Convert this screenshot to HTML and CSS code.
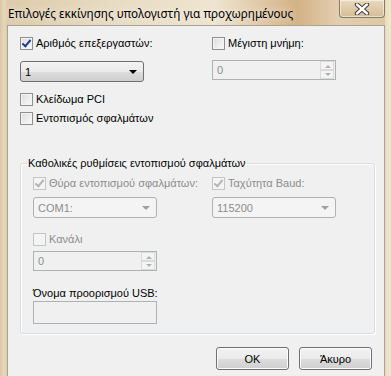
FILE: index.html
```html
<!DOCTYPE html>
<html lang="el">
<head>
  <meta charset="UTF-8" />
  <title>Επιλογές εκκίνησης υπολογιστή για προχωρημένους</title>
  <link rel="stylesheet" href="styles.css">
</head>
<body>
  <div class="window">
    <div class="titlebar">
      <span class="title">Επιλογές εκκίνησης υπολογιστή για προχωρημένους</span>
      <div class="close">
        <svg width="18" height="12" viewBox="0 0 18 12">
          <path d="M4 1.5 L14 10.5 M14 1.5 L4 10.5" stroke="#3d3a36" stroke-width="4.4" stroke-linecap="round"/>
          <path d="M4 1.5 L14 10.5 M14 1.5 L4 10.5" stroke="#fff" stroke-width="2.4" stroke-linecap="round"/>
        </svg>
      </div>
    </div>

    <div class="client">
      <div class="row top-row">
        <div class="col">
          <label class="check"><span class="box checked"></span>Αριθμός επεξεργαστών:</label>
          <div class="combo"><span>1</span><span class="arrow"></span></div>
        </div>
        <div class="col">
          <label class="check"><span class="box"></span>Μέγιστη μνήμη:</label>
          <div class="spin disabled"><span>0</span><span class="spin-btns"><i class="up"></i><i class="down"></i></span></div>
        </div>
      </div>

      <label class="check pci"><span class="box"></span>Κλείδωμα PCI</label>
      <label class="check debug"><span class="box"></span>Εντοπισμός σφαλμάτων</label>

      <fieldset class="group">
        <legend>Καθολικές ρυθμίσεις εντοπισμού σφαλμάτων</legend>
        <div class="row">
          <div class="col">
            <label class="check disabled"><span class="box checked"></span>Θύρα εντοπισμού σφαλμάτων:</label>
            <div class="combo disabled"><span>COM1:</span><span class="arrow"></span></div>
          </div>
          <div class="col">
            <label class="check disabled"><span class="box checked"></span>Ταχύτητα Baud:</label>
            <div class="combo disabled"><span>115200</span><span class="arrow"></span></div>
          </div>
        </div>
        <label class="check disabled channel"><span class="box"></span>Κανάλι</label>
        <div class="spin disabled"><span>0</span><span class="spin-btns"><i class="up"></i><i class="down"></i></span></div>
        <div class="usb-label">Όνομα προορισμού USB:</div>
        <div class="textbox"></div>
      </fieldset>

      <div class="buttons">
        <button class="btn">OK</button>
        <button class="btn">Άκυρο</button>
      </div>
    </div>
  </div>
</body>
</html>
```

FILE: styles.css
```css
html, body {
  margin: 0;
  padding: 0;
  width: 391px;
  height: 376px;
  overflow: hidden;
}

.window {
  width: 391px;
  height: 376px;
  display: flex;
  flex-direction: column;
  background:
    linear-gradient(90deg, #d8c6a2 0px, #e6d8bb 4px, #ddcca9 7px, transparent 7px, transparent 385px, #e8dcc0 385px, #f2e9cc 391px),
    linear-gradient(90deg, #dccaa8 0%, #e8dcc4 30%, #efe4cf 55%, #d3b285 76%, #e2cdb0 86%, #ddc7a3 100%);
  font-family: "Liberation Sans", Arial, sans-serif;
  font-size: 11px;
  color: #000;
}

.titlebar {
  height: 25px;
  display: flex;
  align-items: flex-start;
  justify-content: space-between;
  flex-shrink: 0;
}

.title {
  font-family: "Noto Sans", sans-serif;
  font-size: 11.7px;
  margin: 5px 0 0 8px;
  color: #000;
  text-shadow: 0 0 8px rgba(255, 255, 255, 0.9);
}

.close {
  width: 44px;
  height: 17px;
  margin-right: 6px;
  border: 1px solid #8a7a64;
  border-top: none;
  border-radius: 0 0 4px 4px;
  background: linear-gradient(#e9d9bd, #d6bc96);
  box-shadow: inset 0 0 0 1px rgba(255, 255, 255, 0.5);
  display: flex;
  align-items: center;
  justify-content: center;
}

.client {
  flex: 1;
  margin: 0 6px 0 7px;
  border: 1px solid #a5a39e;
  border-bottom: none;
  background: #f0f0f0;
  padding: 11px 0 0 12px;
  display: flex;
  flex-direction: column;
}

.row {
  display: flex;
}

.col {
  width: 192px;
  flex-shrink: 0;
  display: flex;
  flex-direction: column;
}

.group .col {
  width: 179px;
}

.check {
  display: flex;
  align-items: center;
  height: 13px;
  line-height: 13px;
  white-space: nowrap;
}

.check.disabled {
  color: #8d8d8d;
}

.box {
  width: 11px;
  height: 11px;
  border: 1px solid #8e8f8f;
  background: linear-gradient(135deg, #dcdcdc, #fbfbfb);
  box-shadow: inset 0 0 0 1px #f4f4f4;
  margin-right: 3px;
  position: relative;
  flex-shrink: 0;
}

.box.checked::after {
  content: "";
  position: absolute;
  left: 3px;
  top: 0px;
  width: 3px;
  height: 7px;
  border: solid #1f3f8a;
  border-width: 0 2px 2px 0;
  transform: rotate(40deg);
}

.disabled .box {
  border-color: #c5c5c5;
  background: #f4f4f4;
}

.disabled .box.checked::after {
  border-color: #b5b5b5;
}

.combo {
  width: 118px;
  height: 19px;
  margin-top: 11px;
  border: 1px solid #707070;
  border-radius: 3px;
  background: linear-gradient(#f2f2f2 0%, #ebebeb 50%, #dddddd 51%, #cfcfcf 100%);
  display: flex;
  align-items: center;
  justify-content: space-between;
  padding: 0 0 0 4px;
  box-sizing: content-box;
}

.combo .arrow {
  width: 0;
  height: 0;
  border-left: 4px solid transparent;
  border-right: 4px solid transparent;
  border-top: 4px solid #000;
  margin-right: 6px;
}

.combo.disabled {
  border-color: #adb2b5;
  background: #f4f4f4;
  color: #8d8d8d;
}

.combo.disabled .arrow {
  border-top-color: #a0a0a0;
}

.spin {
  width: 118px;
  height: 18px;
  margin-top: 10px;
  border: 1px solid #adb2b5;
  background: #f0f0f0;
  display: flex;
  align-items: center;
  justify-content: space-between;
  padding-left: 4px;
  color: #8d8d8d;
  box-sizing: content-box;
}

.spin-btns {
  width: 14px;
  height: 18px;
  display: flex;
  flex-direction: column;
  margin-right: 1px;
}

.spin-btns i {
  flex: 1;
  border: 1px solid #dadada;
  background: #f4f4f4;
  position: relative;
}

.spin-btns i::after {
  content: "";
  position: absolute;
  left: 4px;
  top: 3px;
  border-left: 3px solid transparent;
  border-right: 3px solid transparent;
}

.spin-btns .up::after {
  border-bottom: 3px solid #b0b0b0;
}

.spin-btns .down::after {
  border-top: 3px solid #b0b0b0;
  top: 2px;
}

.pci {
  margin-top: 11px;
}

.debug {
  margin-top: 6px;
}

.group {
  width: 355px;
  height: 177px;
  min-inline-size: 0;
  margin: 32px 0 0 0;
  padding: 7px 0 0 12px;
  border: 1px solid #d5dfe5;
  border-radius: 3px;
  box-shadow: inset 1px 1px 0 #fff, 1px 1px 0 #fff;
  box-sizing: border-box;
}

.group legend {
  padding: 0 1px;
  margin-left: -6px;
  line-height: 13px;
}

.group .combo {
  margin-top: 7px;
}

.channel {
  margin-top: 15px;
}

.group .spin {
  margin-top: 5px;
}

.usb-label {
  margin-top: 16px;
  line-height: 13px;
}

.textbox {
  width: 122px;
  height: 21px;
  margin-top: 1px;
  border: 1px solid #adb2b5;
  background: #f0f0f0;
}

.buttons {
  display: flex;
  justify-content: flex-end;
  gap: 10px;
  margin: 13px 12px 0 0;
}

.btn {
  width: 73px;
  height: 23px;
  border: 1px solid #707070;
  border-radius: 3px;
  background: linear-gradient(#f2f2f2 0%, #ebebeb 50%, #dddddd 51%, #cfcfcf 100%);
  box-shadow: inset 0 0 0 1px #fcfcfc;
  font-family: "Liberation Sans", Arial, sans-serif;
  font-size: 11px;
  color: #000;
  padding: 0;
}
```
